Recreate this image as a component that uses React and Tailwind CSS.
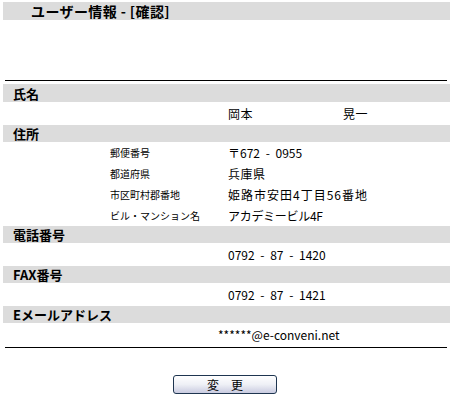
const jp = "font-['Noto_Sans_CJK_JP','Noto_Sans',sans-serif]";

const SectionBar = ({ label, className = "h-[17px]" }) => (
  <div className={`ml-[3px] flex w-[447px] items-center bg-[#dcdcdc] pl-[10px] text-[13px] font-bold leading-none text-black ${className}`}>
    {label}
  </div>
);

const ValueRow = ({ children, pad = "pl-[228px]" }) => (
  <div className={`flex h-[23px] items-center text-[12px] leading-none text-black ${pad}`}>{children}</div>
);

const addressRows = [
  { label: "郵便番号", value: "〒672 - 0955", extra: "[word-spacing:3px]" },
  { label: "都道府県", value: "兵庫県", extra: "tracking-[0.5px]" },
  { label: "市区町村郡番地", value: "姫路市安田4丁目56番地", extra: "tracking-[1px]" },
  { label: "ビル・マンション名", value: "アカデミービル4F", extra: "tracking-[-0.3px]" }
];

const App = () => {
  return (
    <div className={`h-[396px] w-[452px] bg-white pt-[2px] ${jp}`}>
      <div className="ml-[3px] flex h-[18px] w-[447px] items-center bg-[#dcdcdc] pl-[28px] text-[14px] font-bold leading-none tracking-[0.4px] text-black">
        ユーザー情報 - [確認]
      </div>

      <div className="ml-[5px] mt-[60px] h-px w-[442px] bg-black" />

      <div className="mt-[3px]">
        <SectionBar label="氏名" className="h-[18px]" />
        <ValueRow>
          <span className="w-[115px] tracking-[0.5px]">岡本</span>
          <span className="tracking-[0.5px]">晃一</span>
        </ValueRow>

        <SectionBar label="住所" />
        {addressRows.map((row) => (
          <div key={row.label} className="flex h-[21px] items-center leading-none text-black">
            <span className="w-[228px] pl-[110px] text-[10px]">{row.label}</span>
            <span className={`text-[12px] ${row.extra}`}>{row.value}</span>
          </div>
        ))}

        <SectionBar label="電話番号" />
        <ValueRow>
          <span className="[word-spacing:3px]">0792 - 87 - 1420</span>
        </ValueRow>

        <SectionBar label="FAX番号" />
        <ValueRow>
          <span className="[word-spacing:3px]">0792 - 87 - 1421</span>
        </ValueRow>

        <SectionBar label="Eメールアドレス" />
        <ValueRow pad="pl-[218px]">******@e-conveni.net</ValueRow>
      </div>

      <div className="ml-[5px] mt-[1px] h-px w-[442px] bg-black" />

      <div className="mt-[27px] flex justify-center">
        <button className="ml-[-2px] flex h-[19px] w-[104px] items-center justify-center rounded-[3px] border border-[#1e3550] bg-gradient-to-b from-white via-[#eef0f6] to-[#c9cbe0] text-[12px] leading-none text-black">
          変　更
        </button>
      </div>
    </div>
  );
};

export default App;
